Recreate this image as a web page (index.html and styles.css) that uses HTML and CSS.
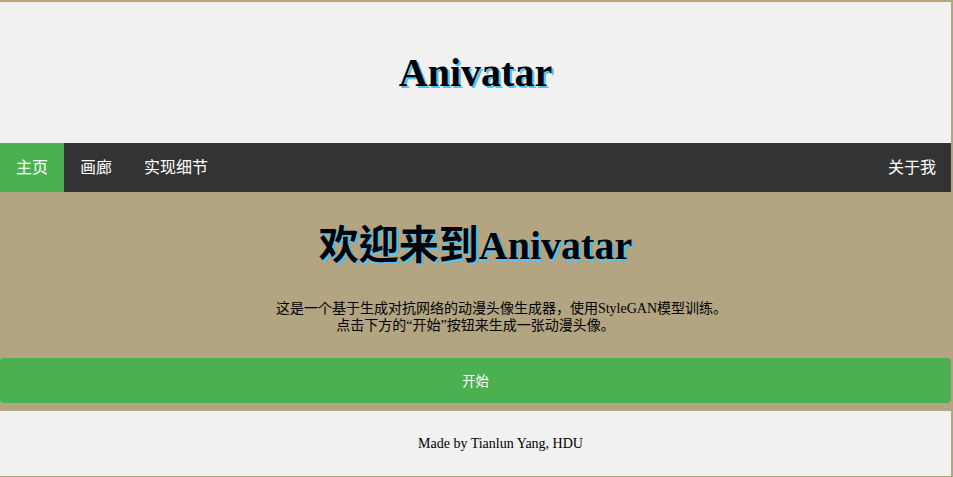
FILE: index.html
```html
<!DOCTYPE html>
<html>
<head>
<meta charset="utf-8">
<title>Anivatar</title>
<link rel="stylesheet" href="styles.css">
</head>
<body>
<div class="page">
  <header class="header">
    <h1 class="title">Anivatar</h1>
  </header>
  <nav class="nav">
    <a class="nav-item active" href="#">主页</a>
    <a class="nav-item" href="#">画廊</a>
    <a class="nav-item" href="#">实现细节</a>
    <a class="nav-item right" href="#">关于我</a>
  </nav>
  <main class="main">
    <h2 class="welcome">欢迎来到Anivatar</h2>
    <p class="intro"><span class="line1">这是一个基于生成对抗网络的动漫头像生成器，使用StyleGAN模型训练。</span><br>点击下方的“开始”按钮来生成一张动漫头像。</p>
    <button class="start">开始</button>
  </main>
  <footer class="footer">Made by Tianlun Yang, HDU</footer>
</div>
</body>
</html>
```
FILE: styles.css
```css
html, body {
  margin: 0;
  padding: 0;
}
body {
  background: #b3a582;
  padding: 2px 2px 1px 0;
  font-family: "Liberation Serif", "Noto Sans CJK TC", serif;
}
.page {
  display: flex;
  flex-direction: column;
}
.header {
  height: 141px;
  background: #f1f1f1;
  display: flex;
  align-items: center;
  justify-content: center;
}
.title {
  margin: 1px 0 0;
  font-size: 40px;
  font-weight: bold;
  line-height: 46px;
  color: #000;
  text-shadow: 2px 2px #4fc3f7;
}
.nav {
  display: flex;
  height: 49px;
  background: #333;
}
.nav-item {
  display: block;
  padding: 14px 16px;
  line-height: 21px;
  font-size: 16px;
  font-family: "Liberation Sans", "Noto Sans CJK TC", sans-serif;
  color: #fff;
  text-decoration: none;
}
.nav-item.active {
  background: #4caf50;
}
.nav-item.right {
  margin-left: auto;
  padding-right: 15px;
}
.main {
  height: 219px;
  display: flex;
  flex-direction: column;
  align-items: stretch;
}
.welcome {
  margin: 31px 0 0;
  font-size: 40px;
  line-height: 46px;
  font-weight: bold;
  text-align: center;
  text-shadow: 2px 2px #4fc3f7;
}
.intro {
  margin: 31px 0 0;
  font-size: 14px;
  line-height: 17px;
  text-align: center;
  color: #000;
  font-family: "Liberation Serif", "Noto Sans CJK KR", serif;
}
.line1 {
  padding-left: 52px;
}
.start {
  margin-top: 24px;
  height: 45px;
  border: none;
  border-radius: 4px;
  background: #4caf50;
  color: #fff;
  font-family: "Liberation Sans", "Noto Sans CJK TC", sans-serif;
  font-size: 13.333px;
}
.footer {
  height: 65px;
  padding-left: 50px;
  background: #f1f1f1;
  display: flex;
  align-items: center;
  justify-content: center;
  font-size: 14px;
}
```
